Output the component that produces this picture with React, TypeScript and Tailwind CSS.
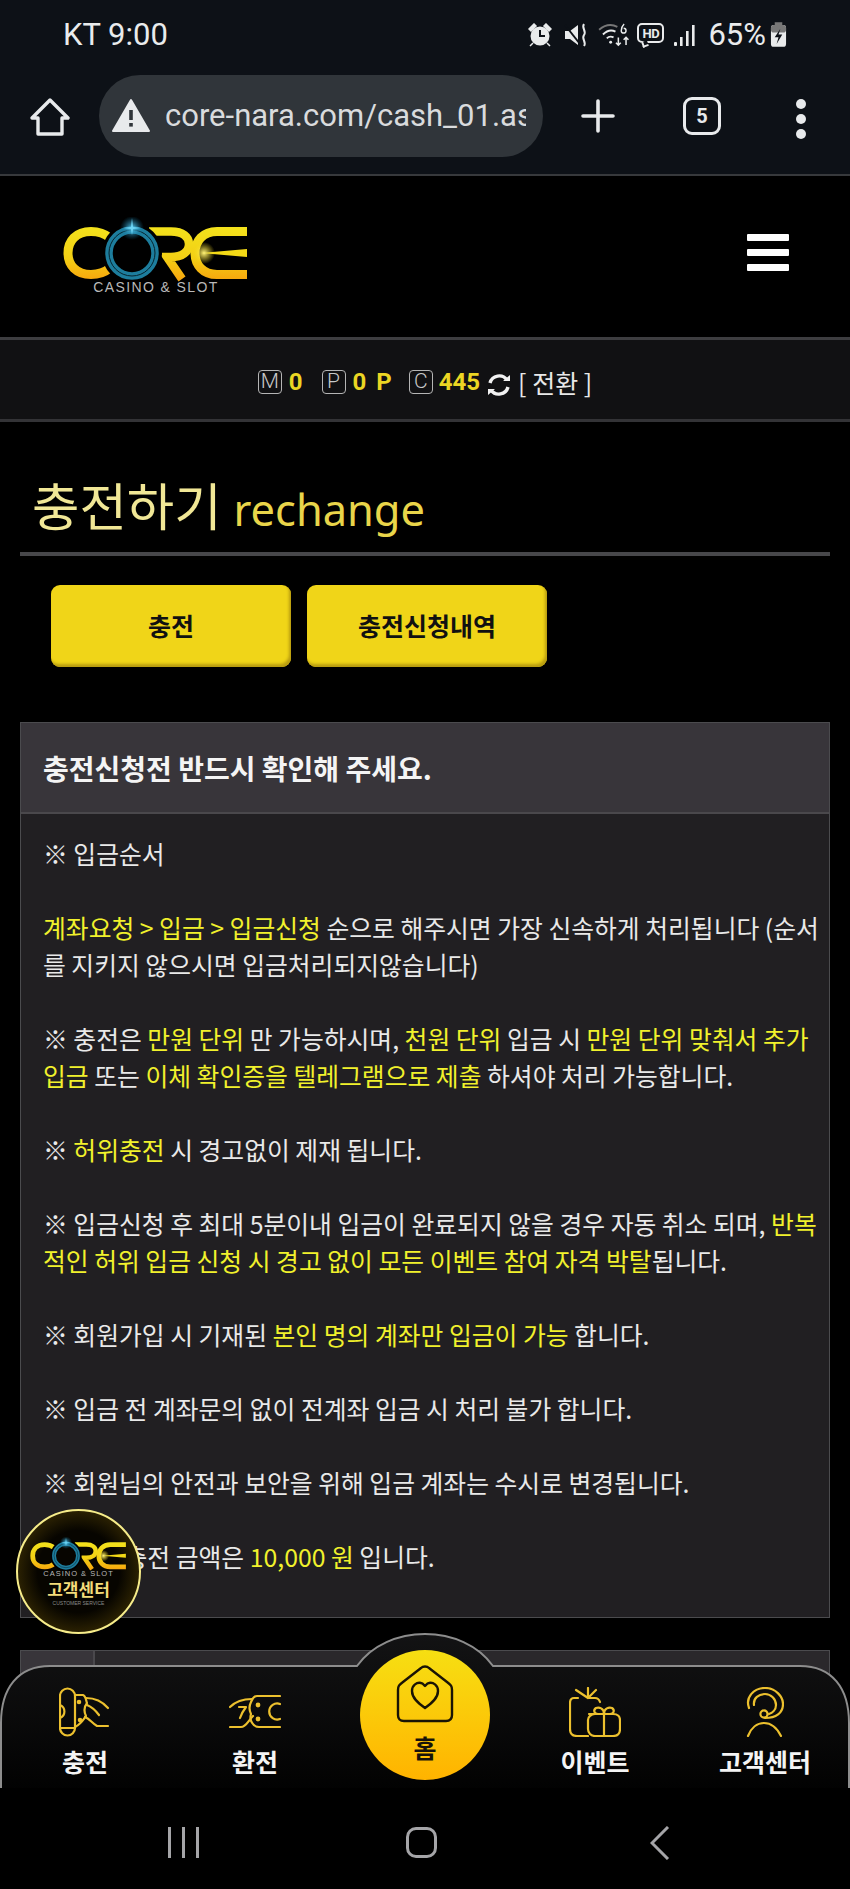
import React from 'react';

const Y = ({ children }: { children: React.ReactNode }) => <span className="text-[#f1f12c]">{children}</span>;

const CoreMark = ({ className, id }: { className: string; id: string }) => (
  <svg viewBox="0 0 190 72" className={className} fill="none">
    <defs>
      <linearGradient id={id} gradientUnits="userSpaceOnUse" x1="0" y1="10" x2="0" y2="62">
        <stop offset="0" stopColor="#f3e21c" />
        <stop offset="0.6" stopColor="#f3cf14" />
        <stop offset="1" stopColor="#f7a80e" />
      </linearGradient>
      <radialGradient id={`${id}-spark`}>
        <stop offset="0" stopColor="#58c8ee" />
        <stop offset="1" stopColor="#0d6f9a" stopOpacity="0" />
      </radialGradient>
      <radialGradient id={`${id}-glow`}>
        <stop offset="0" stopColor="#fff27a" />
        <stop offset="1" stopColor="#f3d916" stopOpacity="0" />
      </radialGradient>
    </defs>
    {/* C */}
    <path d="M49 21 C 43 16 38 14.5 30 14.5 C 15 14.5 7 24 7 36 C 7 48 15 57.5 30 57.5 C 38 57.5 43 56 49 51" stroke={`url(#${id})`} strokeWidth="9" />
    {/* R */}
    <path d="M88 14.5 H110 C 122 14.5 128 20 128 27 C 128 35 121 40 110 40 H106 L121 62" stroke={`url(#${id})`} strokeWidth="8.5" />
    {/* E */}
    <path d="M186 14.5 H156 C 142 14.5 134 24 134 36 C 134 48 142 57.5 156 57.5 H186" stroke={`url(#${id})`} strokeWidth="9" />
    <path d="M140 36 L186 32 V40 Z" fill="#f3d916" />
    <circle cx="143" cy="36" r="11" fill={`url(#${id}-glow)`} />
    {/* O */}
    <circle cx="71" cy="36" r="27" stroke="#000" strokeWidth="6" />
    <circle cx="71" cy="36" r="23" stroke="#1d7d9d" strokeWidth="7.5" />
    <circle cx="71" cy="36" r="23" stroke="#06242e" strokeWidth="1" />
    <circle cx="71" cy="11" r="12" fill={`url(#${id}-spark)`} />
    <path d="M71 1 L72 10 L80 11 L72 12 L71 18 L70 12 L62 11 L70 10 Z" fill="#6ed6f6" />
  </svg>
);

const StatusIcons = () => (
  <div className="flex items-center text-[#e9ebec]">
    <svg viewBox="0 0 24 24" className="w-[24px] h-[24px]" fill="currentColor">
      <circle cx="12" cy="13" r="9.5" />
      <path d="M1 6 L6 1 L8 3 L3 8 Z M23 6 L18 1 L16 3 L21 8 Z M5 20 L2 23 M19 20 L22 23" stroke="currentColor" strokeWidth="1.5" />
      <path d="M12 7 V13 H17" stroke="#0d1117" strokeWidth="2" fill="none" />
    </svg>
    <svg viewBox="0 0 24 24" className="w-[24px] h-[24px] ml-[12px]">
      <path d="M1 8 H6 L14 2 V22 L6 16 H1 Z" fill="currentColor" />
      <path d="M1 2 L16 21" stroke="#0d1117" strokeWidth="2" />
      <path d="M20 1 C 17 5 23 8 20 12 C 17 16 23 19 20 23" stroke="currentColor" strokeWidth="2" fill="none" />
    </svg>
    <svg viewBox="0 0 34 26" className="w-[33px] h-[25px] ml-[10px]" fill="none" stroke="currentColor">
      <path d="M1 8 C 7 3 14 2 20 5" stroke="#777" strokeWidth="2" />
      <path d="M5 13 C 9 9 14 8 18 10" strokeWidth="2" />
      <path d="M9 17 C 11 15 14 15 16 16" strokeWidth="2" />
      <circle cx="13" cy="21" r="1.5" fill="currentColor" stroke="none" />
      <path d="M21 16 V24 M18.5 21.5 L21 24 L23.5 21.5 M29 24 V16 M26.5 18.5 L29 16 L31.5 18.5" strokeWidth="1.6" />
      <path d="M27 2 C 25 4 24 6 24 9 A 2.5 2.5 0 1 0 26.5 6.5" strokeWidth="1.5" />
    </svg>
    <div className="relative ml-[6px] mt-[-3px] w-[27px] h-[20px] rounded-[5px] border-[2px] border-[#e9ebec] flex items-center justify-center font-['Roboto',sans-serif] font-bold text-[13px] leading-none tracking-[-0.5px]">
      HD
      <span className="absolute left-[3px] bottom-[-6px] w-[6px] h-[6px] border-l-[2px] border-b-[2px] border-[#e9ebec] bg-[#0d1117] rotate-[-20deg]" />
    </div>
    <svg viewBox="0 0 22 24" className="w-[22px] h-[24px] ml-[10px]" fill="currentColor">
      <rect x="0" y="19" width="3" height="4" rx="1" />
      <rect x="6" y="14" width="2.6" height="9" />
      <rect x="12" y="8" width="2.6" height="15" />
      <rect x="18" y="2" width="2.6" height="21" />
    </svg>
    <span className="ml-[12px] font-['Roboto',sans-serif] text-[31px] leading-none">65%</span>
    <svg viewBox="0 0 18 26" className="w-[17px] h-[25px] ml-[4px]">
      <rect x="5" y="0" width="8" height="3" fill="#777" />
      <rect x="1" y="3" width="16" height="23" rx="3" fill="#e9ebec" />
      <rect x="1" y="3" width="16" height="8" rx="3" fill="#777" />
      <path d="M11 7 L5 16 H9 L7 23 L13 13 H9 Z" fill="#0d1117" />
    </svg>
  </div>
);

const ChromeBar = () => (
  <div className="h-[112px] flex items-start relative">
    <svg viewBox="0 0 40 40" className="w-[40px] h-[40px] ml-[30px] mt-[35px]" fill="none" stroke="#e8eaec" strokeWidth="3.4" strokeLinejoin="round">
      <path d="M20 3 L38 21 H32 V37 H8 V21 H2 Z" />
    </svg>
    <div className="ml-[29px] mt-[13px] w-[444px] h-[82px] rounded-full bg-[#30353a] flex items-center pl-[13px]">
      <svg viewBox="0 0 38 34" className="w-[38px] h-[34px] shrink-0 mt-[-3px]">
        <path d="M19 2 L37 33 H1 Z" fill="#e8eaec" stroke="#e8eaec" strokeWidth="2" strokeLinejoin="round" />
        <rect x="17.2" y="12" width="3.6" height="10" fill="#30353a" />
        <rect x="17.2" y="25" width="3.6" height="3.6" fill="#30353a" />
      </svg>
      <div className="ml-[15px] w-[361px] overflow-hidden whitespace-nowrap font-['Roboto',sans-serif] text-[31px] leading-[40px] text-[#d9dbdd]">core-nara.com/cash_01.asp</div>
    </div>
    <svg viewBox="0 0 34 34" className="w-[34px] h-[34px] ml-[38px] mt-[37px]" stroke="#e8eaec" strokeWidth="3.6" strokeLinecap="round">
      <path d="M17 2 V32 M2 17 H32" />
    </svg>
    <div className="ml-[68px] mt-[35px] w-[38px] h-[38px] rounded-[9px] border-[3.5px] border-[#e8eaec] flex items-center justify-center font-['Roboto',sans-serif] font-bold text-[20px] text-[#e8eaec] leading-none">5</div>
    <div className="ml-[75px] mt-[37px] flex flex-col gap-[5px]">
      <span className="w-[10px] h-[10px] rounded-full bg-[#e8eaec]" />
      <span className="w-[10px] h-[10px] rounded-full bg-[#e8eaec]" />
      <span className="w-[10px] h-[10px] rounded-full bg-[#e8eaec]" />
    </div>
  </div>
);

const MoneyBox = ({ letter }: { letter: string }) => (
  <span className="w-[24px] h-[24px] rounded-[4px] border border-[#b5b5b5] flex items-center justify-center font-['Roboto',sans-serif] font-light text-[21px] leading-none text-[#c9c9c9]">{letter}</span>
);

const BalanceBar = () => (
  <div className="h-[85px] bg-[#111113] border-t-[3px] border-b-[3px] border-t-[#3d3d40] border-b-[#333336] flex items-center justify-center">
    <div className="flex items-center font-['Roboto',sans-serif] font-bold text-[24px] leading-none text-[#ecd623] mt-[4px]">
      <MoneyBox letter="M" />
      <span className="ml-[7px]">0</span>
      <span className="ml-[19px]"><MoneyBox letter="P" /></span>
      <span className="ml-[7px] tracking-[2px]">0 P</span>
      <span className="ml-[15px]"><MoneyBox letter="C" /></span>
      <span className="ml-[6px]">445</span>
      <svg viewBox="0 0 24 24" className="w-[24px] h-[24px] ml-[7px] mt-[6px]" fill="none" stroke="#f2f2f2" strokeWidth="3.4">
        <path d="M3 10 A 9.5 9.5 0 0 1 20 7" />
        <path d="M21 14 A 9.5 9.5 0 0 1 4 17" />
        <path d="M16 8 H23 V2 Z M8 16 H1 V22 Z" fill="#f2f2f2" stroke="none" />
      </svg>
      <span className="ml-[7px] mt-[2px] font-['Noto_Sans_CJK_KR',sans-serif] font-normal text-[25px] text-[#e8e8e8] whitespace-nowrap">[ 전환 ]</span>
    </div>
  </div>
);

const NoticePanel = () => (
  <div className="mt-[55px] mx-[20px] border border-[#4b4b4e] bg-[#211f22]">
    <div className="h-[91px] bg-[#38353a] border-b-2 border-[#4a484c] flex items-center pl-[22px] font-bold text-[28px] text-[#f4f4f4]">충전신청전 반드시 확인해 주세요.</div>
    <div className="pt-[21px] pb-[42px] pl-[22px] pr-[6px] text-[24.8px] leading-[37px] text-[#e9e9e9]">
      ※ 입금순서<br /><br />
      <Y>계좌요청 &gt; 입금 &gt; 입금신청</Y> 순으로 해주시면 가장 신속하게 처리됩니다 (순서를 지키지 않으시면 입금처리되지않습니다)<br /><br />
      ※ 충전은 <Y>만원 단위</Y> 만 가능하시며, <Y>천원 단위</Y> 입금 시 <Y>만원 단위 맞춰서 추가 입금</Y> 또는 <Y>이체 확인증을 텔레그램으로 제출</Y> 하셔야 처리 가능합니다.<br /><br />
      ※ <Y>허위충전</Y> 시 경고없이 제재 됩니다.<br /><br />
      ※ 입금신청 후 최대 5분이내 입금이 완료되지 않을 경우 자동 취소 되며, <Y>반복적인 허위 입금 신청 시 경고 없이 모든 이벤트 참여 자격 박탈</Y>됩니다.<br /><br />
      ※ 회원가입 시 기재된 <Y>본인 명의 계좌만 입금이 가능</Y> 합니다.<br /><br />
      ※ 입금 전 계좌문의 없이 전계좌 입금 시 처리 불가 합니다.<br /><br />
      ※ 회원님의 안전과 보안을 위해 입금 계좌는 수시로 변경됩니다.<br /><br />
      ※ 최소 충전 금액은 <Y>10,000 원</Y> 입니다.
    </div>
  </div>
);

const ChargeIcon = () => (
  <svg viewBox="0 0 52 50" className="w-[52px] h-[50px]" fill="none" stroke="#ecc02e" strokeWidth="2.2" strokeLinecap="round" strokeLinejoin="round">
    <path d="M1 9 A 7.5 7.5 0 0 1 16 9 V41 A 7.5 7.5 0 0 1 1 41 Z" />
    <path d="M1 18 A 7 7 0 0 1 1 31" />
    <path d="M16 8 H24 C 27 9 27 14 28 16 C 25 20 25 25 27 29 C 24 33 22 37 16 40 M1 41 H16" />
    <path d="M27 11 C 35 11 43 14 49 21 M28 18 C 33 20 37 24 40 28 M26 30 C 31 32 33 36 38 39 H49" />
    <circle cx="20" cy="15" r="1.2" fill="#ecc02e" />
    <circle cx="21" cy="33" r="1.2" fill="#ecc02e" />
  </svg>
);

const ExchangeIcon = () => (
  <svg viewBox="0 0 52 36" className="w-[52px] h-[36px]" fill="none" stroke="#ecc02e" strokeWidth="2.2" strokeLinecap="round" strokeLinejoin="round">
    <path d="M51 2 H28 C 24 2 23 6 22 8 C 20 12 20 16 22 20 C 20 26 24 33 30 33 H51" />
    <path d="M1 13 C 6 8 14 5 23 5 M10 13 H17 C 14 17 12 21 11 24 M1 33 H12 C 17 33 19 27 24 22" />
    <path d="M51 10 A 8 8 0 1 0 51 25" />
    <circle cx="29" cy="11" r="1.3" fill="#ecc02e" />
    <circle cx="29" cy="25" r="1.3" fill="#ecc02e" />
  </svg>
);

const EventIcon = () => (
  <svg viewBox="0 0 52 50" className="w-[52px] h-[50px]" fill="none" stroke="#ecc02e" strokeWidth="2.2" strokeLinecap="round" strokeLinejoin="round">
    <path d="M19 11 L19 1 M19 11 L7 3 M19 11 L27 3 M9 11 H5 C 2 11 1 13 1 16 V42 C 1 46 3 49 8 49 H19" />
    <path d="M20 11 H26 C 29 11 30 12 31 15" />
    <path d="M20 27 H44 C 49 27 51 30 51 33 V42 C 51 46 49 49 44 49 H26 C 22 49 19 46 19 42 V33 C 19 30 22 27 26 27 Z" />
    <path d="M35 27 V49" />
    <path d="M35 27 C 35 21 30 20 27 21 C 24 23 25 27 29 27 M35 27 C 35 21 40 20 43 21 C 46 23 45 27 41 27" />
  </svg>
);

const AgentIcon = () => (
  <svg viewBox="0 0 38 50" className="w-[38px] h-[50px]" fill="none" stroke="#ecc02e" strokeWidth="2.2" strokeLinecap="round">
    <path d="M3 21 C -1 10 8 1 19 1 C 30 1 37 10 37 17 C 37 26 30 31 19 31" />
    <path d="M8 18 C 7 11 13 7 19 7 C 25 7 30 12 30 18 C 30 23 26 26 23 27" />
    <circle cx="18" cy="27" r="3.6" />
    <path d="M2 49 C 5 41 11 36 18 36 C 25 36 31 41 35 49" />
  </svg>
);

const NavItem = ({ icon, label }: { icon: React.ReactNode; label: string }) => (
  <div className="flex flex-col items-center">
    <div className="h-[50px] flex items-center justify-center">{icon}</div>
    <span className="mt-[7px] font-bold text-[25px] leading-[34px] text-[#f4f4f4] whitespace-nowrap">{label}</span>
  </div>
);

const BottomNav = () => (
  <div className="absolute left-0 right-0 bottom-[99px] h-[157px]">
    <svg viewBox="0 0 850 157" className="absolute inset-0 w-[850px] h-[157px]">
      <defs>
        <linearGradient id="navFill" x1="0" y1="0" x2="0" y2="1">
          <stop offset="0" stopColor="#131314" />
          <stop offset="1" stopColor="#020202" />
        </linearGradient>
      </defs>
      <path d="M1 157 V90 C 1 55 18 33 50 33 H357 C 372 12 398 1 425 1 C 452 1 478 12 493 33 H800 C 832 33 849 55 849 90 V157 Z" fill="url(#navFill)" stroke="#8d8d8d" strokeWidth="2" />
      <rect x="0" y="155" width="850" height="2" fill="#000" />
    </svg>
    <div className="relative grid grid-cols-5 pt-[54px]">
      <NavItem icon={<ChargeIcon />} label="충전" />
      <NavItem icon={<ExchangeIcon />} label="환전" />
      <div className="relative">
        <div className="absolute left-[20px] top-[-37px] w-[130px] h-[130px] rounded-full bg-gradient-to-b from-[#f6df12] to-[#ffb300] flex flex-col items-center pt-[15px]">
          <svg viewBox="0 0 58 58" className="w-[58px] h-[58px]" fill="none" stroke="#1a1405" strokeWidth="2.4" strokeLinejoin="round">
            <path d="M7 17 L25 3 C 27 1 31 1 33 3 L51 17 C 55 20 56 21 56 25 V50 C 56 54 54 56 50 56 H8 C 4 56 2 54 2 50 V25 C 2 21 3 20 7 17 Z" />
            <path d="M29 43 C 22 38 16 33 16 26 C 16 20 21 17 25 18 C 27 18 28 20 29 21 C 30 20 31 18 33 18 C 37 17 42 20 42 26 C 42 33 36 38 29 43 Z" />
          </svg>
          <span className="mt-[7px] font-bold text-[25px] leading-[34px] text-[#17120a]">홈</span>
        </div>
      </div>
      <NavItem icon={<EventIcon />} label="이벤트" />
      <NavItem icon={<AgentIcon />} label="고객센터" />
    </div>
  </div>
);

const FloatingSupport = () => (
  <div className="absolute left-[16px] top-[1509px] w-[125px] h-[125px] rounded-full border-[2px] border-[#f6ec8a] bg-[radial-gradient(circle,#070500_48%,#2c2202_72%,#8d7208_92%,#e4c71c_100%)] flex flex-col items-center">
    <CoreMark id="badge" className="w-[99px] h-[37.5px] mt-[26px] shrink-0" />
    <span className="mt-[-6px] font-['Liberation_Sans',sans-serif] text-[7.5px] leading-[9px] tracking-[1px] text-[#b8b8b8] whitespace-nowrap">CASINO &amp; SLOT</span>
    <span className="font-bold text-[17px] leading-[22px] text-[#f4dc7a] whitespace-nowrap">고객센터</span>
    <span className="font-['Liberation_Sans',sans-serif] text-[5px] leading-[6px] text-[#8a8a8a] whitespace-nowrap">CUSTOMER SERVICE</span>
  </div>
);

const SystemNav = () => (
  <div className="absolute left-0 right-0 bottom-0 h-[99px] bg-black">
    <div className="absolute left-[168px] top-[37px] flex gap-[11px]">
      <span className="w-[3px] h-[31px] bg-[#a5a5a8]" />
      <span className="w-[3px] h-[31px] bg-[#a5a5a8]" />
      <span className="w-[3px] h-[31px] bg-[#a5a5a8]" />
    </div>
    <div className="absolute left-[406px] top-[37px] w-[31px] h-[31px] rounded-[10px] border-[3px] border-[#a5a5a8]" />
    <svg viewBox="0 0 20 34" className="absolute left-[650px] top-[36px] w-[20px] h-[34px]" fill="none" stroke="#a5a5a8" strokeWidth="3">
      <path d="M18 1 L2 17 L18 33" />
    </svg>
  </div>
);

export default function App() {
  return (
    <div className="relative h-[1889px] w-[850px] overflow-hidden bg-black font-['Noto_Sans_CJK_KR','Noto_Sans',sans-serif]">
      {/* Phone status bar + browser toolbar */}
      <div className="h-[176px] bg-[#0d1117] border-b-[2px] border-[#37393c]">
        <div className="h-[62px] flex items-end justify-between pl-[63px] pr-[63px] pb-[12px]">
          <span className="font-['Roboto',sans-serif] text-[31px] leading-none text-[#e9ebec]">KT 9:00</span>
          <StatusIcons />
        </div>
        <ChromeBar />
      </div>

      {/* Site header */}
      <div className="h-[161px] flex justify-between pl-[61px] pr-[61px]">
        <div className="pt-[41px] flex flex-col items-center w-[190px]">
          <CoreMark id="main" className="w-[190px] h-[72px] shrink-0" />
          <span className="mt-[-10px] font-['Liberation_Sans',sans-serif] text-[14px] leading-[16px] tracking-[1.4px] text-[#b9b9b9] whitespace-nowrap">CASINO &amp; SLOT</span>
        </div>
        <div className="pt-[58px] flex flex-col gap-[8px]">
          <span className="w-[42px] h-[7px] rounded-[1px] bg-white" />
          <span className="w-[42px] h-[7px] rounded-[1px] bg-white" />
          <span className="w-[42px] h-[7px] rounded-[1px] bg-white" />
        </div>
      </div>

      <BalanceBar />

      {/* Page title */}
      <div className="mt-[40px] mx-[20px] h-[94px] border-b-4 border-[#47474a] pl-[12px] flex items-start whitespace-nowrap">
        <span className="mt-[6px] text-[51.5px] leading-[72px] text-[#f1e796]">충전하기</span>
        <span className="ml-[12px] mt-[12px] font-['Noto_Sans',sans-serif] text-[43.4px] leading-[72px] text-[#e9d54a]">rechange</span>
      </div>

      {/* Tabs */}
      <div className="mt-[29px] ml-[51px] flex gap-[16px]">
        <div className="w-[240px] h-[82px] rounded-[9px] bg-[#f0d518] shadow-[inset_-2px_-3px_3px_#b89c10] flex items-center justify-center font-bold text-[25px] text-[#111]">충전</div>
        <div className="w-[240px] h-[82px] rounded-[9px] bg-[#f0d518] shadow-[inset_-2px_-3px_3px_#b89c10] flex items-center justify-center font-bold text-[25px] text-[#111]">충전신청내역</div>
      </div>

      <NoticePanel />

      {/* Next panel, mostly hidden behind the bottom nav */}
      <div className="mt-[32px] mx-[20px] h-[200px] border border-[#4b4b4e] bg-[#211f22] flex">
        <div className="w-[74px] bg-[#38353a] border-r-2 border-[#4a484c]" />
        <div className="flex-1 h-[60px] bg-[#2a282b]" />
      </div>

      <FloatingSupport />
      <BottomNav />
      <SystemNav />
    </div>
  );
}
